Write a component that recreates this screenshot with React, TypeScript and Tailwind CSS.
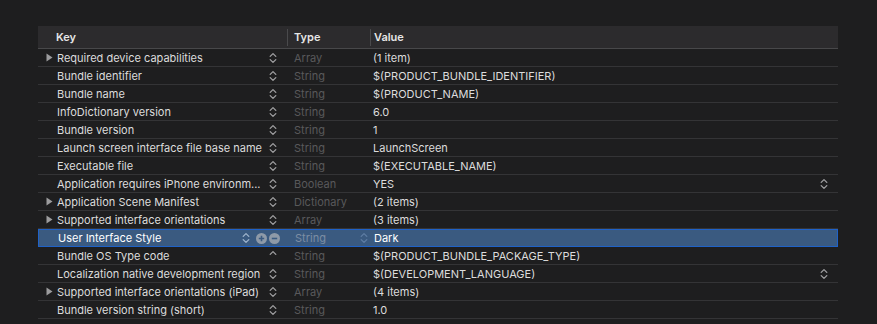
import React from 'react';

type Row = {
  key: string;
  type: string;
  value: string;
  expandable?: boolean;
  valueStepper?: boolean;
  selected?: boolean;
  upOnly?: boolean;
};

const rows: Row[] = [
  { key: 'Required device capabilities', type: 'Array', value: '(1 item)', expandable: true },
  { key: 'Bundle identifier', type: 'String', value: '$(PRODUCT_BUNDLE_IDENTIFIER)' },
  { key: 'Bundle name', type: 'String', value: '$(PRODUCT_NAME)' },
  { key: 'InfoDictionary version', type: 'String', value: '6.0' },
  { key: 'Bundle version', type: 'String', value: '1' },
  { key: 'Launch screen interface file base name', type: 'String', value: 'LaunchScreen' },
  { key: 'Executable file', type: 'String', value: '$(EXECUTABLE_NAME)' },
  { key: 'Application requires iPhone environm...', type: 'Boolean', value: 'YES', valueStepper: true },
  { key: 'Application Scene Manifest', type: 'Dictionary', value: '(2 items)', expandable: true },
  { key: 'Supported interface orientations', type: 'Array', value: '(3 items)', expandable: true },
  { key: 'User Interface Style', type: 'String', value: 'Dark', selected: true },
  { key: 'Bundle OS Type code', type: 'String', value: '$(PRODUCT_BUNDLE_PACKAGE_TYPE)', upOnly: true },
  { key: 'Localization native development region', type: 'String', value: '$(DEVELOPMENT_LANGUAGE)', valueStepper: true },
  { key: 'Supported interface orientations (iPad)', type: 'Array', value: '(4 items)', expandable: true },
  { key: 'Bundle version string (short)', type: 'String', value: '1.0' },
];

function Stepper({ color = '#a0a0a2', upOnly = false }: { color?: string; upOnly?: boolean }) {
  return (
    <svg width="8" height="12" viewBox="0 0 8 12" fill="none" stroke={color} strokeWidth="1.3" strokeLinecap="round" strokeLinejoin="round">
      <path d="M1.2 4.4 L4 1.6 L6.8 4.4" />
      {!upOnly && <path d="M1.2 7.6 L4 10.4 L6.8 7.6" />}
    </svg>
  );
}

function Triangle() {
  return (
    <svg width="7" height="9" viewBox="0 0 7 9">
      <path d="M0.5 0.5 L6.5 4.5 L0.5 8.5 Z" fill="#9c9c9e" />
    </svg>
  );
}

function CircleButton({ plus }: { plus?: boolean }) {
  return (
    <svg width="11" height="11" viewBox="0 0 11 11">
      <circle cx="5.5" cy="5.5" r="5.5" fill="#8e9aa8" />
      <path d={plus ? 'M2.8 5.5 H8.2 M5.5 2.8 V8.2' : 'M2.8 5.5 H8.2'} stroke="#3a5a80" strokeWidth="1.6" />
    </svg>
  );
}

export default function App() {
  return (
    <div
      className="w-[877px] h-[324px] bg-[#1e1e1f] overflow-hidden pt-[26px]"
      style={{ fontFamily: 'Inter, "Liberation Sans", sans-serif' }}
    >
      <div className="ml-[38px] w-[800px] text-[11px] leading-[16px]">
        <div className="flex h-[23px] items-center bg-[#2c2b2d] border-b border-[#48484a] text-[#e6e6e6] font-semibold">
          <div className="w-[249px] pl-[18px] flex items-center h-full">Key</div>
          <div className="w-[83px] flex items-center h-full">
            <div className="w-px h-[17px] bg-[#4a4a4c]" />
            <span className="pl-[6px]">Type</span>
          </div>
          <div className="flex-1 flex items-center h-full">
            <div className="w-px h-[17px] bg-[#4a4a4c]" />
            <span className="pl-[3px]">Value</span>
          </div>
        </div>
        {rows.map((r) => (
          <div
            key={r.key}
            className={
              r.selected
                ? 'flex h-[18px] items-center bg-[#3a5a80] border border-[#1f62c8] text-white'
                : 'flex h-[18px] items-center border-b border-[#343436] text-[#dcdcdc]'
            }
          >
            <div className="w-[249px] flex items-center h-full">
              <div className="w-[19px] flex justify-end pr-[4px]">{r.expandable && <Triangle />}</div>
              <span className="flex-1 whitespace-nowrap">{r.key}</span>
              {r.selected ? (
                <div className="flex items-center gap-[2px] pr-[8px] pl-[4px]">
                  <div className="mr-[4px] flex"><Stepper color="#9fb4cc" /></div>
                  <CircleButton plus />
                  <CircleButton />
                </div>
              ) : (
                <div className="flex pr-[10px] pl-[4px]">
                  <Stepper upOnly={r.upOnly} />
                </div>
              )}
            </div>
            <div className={r.selected ? 'w-[83px] pl-[7px] text-[#7c8ea4] flex items-center justify-between pr-[3px]' : 'w-[83px] pl-[7px] text-[#59595b]'}>
              <span>{r.type}</span>
              {r.selected && <Stepper color="#5e7da3" />}
            </div>
            <div className="flex-1 flex items-center justify-between pl-[3px] pr-[10px]">
              <span className="whitespace-nowrap">{r.value}</span>
              {r.valueStepper && <Stepper />}
            </div>
          </div>
        ))}
      </div>
    </div>
  );
}
